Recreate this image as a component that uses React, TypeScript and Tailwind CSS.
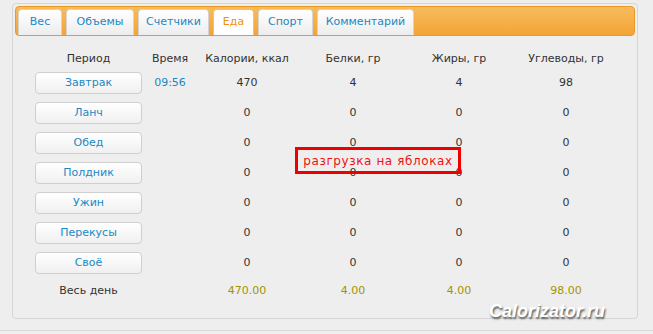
import React from "react";

const tabs = [
  { label: "Вес", w: "w-[44px]" },
  { label: "Объемы", w: "w-[68px]" },
  { label: "Счетчики", w: "w-[71px]" },
  { label: "Еда", w: "w-[41px]" },
  { label: "Спорт", w: "w-[55px]" },
  { label: "Комментарий", w: "w-[97px]" },
];

const rows = [
  { name: "Завтрак", time: "09:56", vals: ["470", "4", "4", "98"] },
  { name: "Ланч", time: "", vals: ["0", "0", "0", "0"] },
  { name: "Обед", time: "", vals: ["0", "0", "0", "0"] },
  { name: "Полдник", time: "", vals: ["0", "0", "0", "0"] },
  { name: "Ужин", time: "", vals: ["0", "0", "0", "0"] },
  { name: "Перекусы", time: "", vals: ["0", "0", "0", "0"] },
  { name: "Своё", time: "", vals: ["0", "0", "0", "0"] },
];

const grid = "grid grid-cols-[107px_56px_98px_114px_98px_116px] items-center text-center";

export default function App() {
  return (
    <div className="relative w-[653px] h-[334px] overflow-hidden bg-[#eeeeee] text-[11px] text-[#333] font-['DejaVu_Sans',sans-serif]">
      <div className="absolute left-0 right-0 top-[330px] h-px bg-[#d9d9d9]" />

      <div className="ml-[12px] mt-[3px] w-[626px] h-[316px] rounded-[4px] border border-[#d6d6d6] bg-[#eeeeee] p-[2px]">
        {/* tab bar */}
        <div className="flex h-[30px] items-end gap-[4px] rounded-[4px] border border-[#ea9a22] bg-gradient-to-b from-[#f8bb5c] to-[#f3a435] pl-[2px]">
          {tabs.map((t) =>
            t.label === "Еда" ? (
              <div
                key={t.label}
                className={`${t.w} flex h-[26px] items-center justify-center rounded-t-[4px] border border-b-0 border-[#f5c26a] bg-white text-[#ef9013]`}
              >
                {t.label}
              </div>
            ) : (
              <div
                key={t.label}
                className={`${t.w} flex h-[26px] items-center justify-center rounded-t-[4px] border border-b-0 border-[#d4d4d4] bg-gradient-to-b from-[#ffffff] to-[#ededed] text-[#1b88c4]`}
              >
                {t.label}
              </div>
            )
          )}
        </div>

        {/* table */}
        <div className="ml-[20px] mt-[13px]">
          <div className={`${grid} h-[20px]`}>
            <div>Период</div>
            <div>Время</div>
            <div>Калории, ккал</div>
            <div>Белки, гр</div>
            <div>Жиры, гр</div>
            <div>Углеводы, гр</div>
          </div>
          <div className="mt-[3px] flex flex-col gap-[8px]">
            {rows.map((r) => (
              <div key={r.name} className={`${grid} h-[22px]`}>
                <div className="flex h-[22px] items-center justify-center rounded-[4px] border border-[#cfcfcf] bg-gradient-to-b from-[#ffffff] to-[#f0f0f0] text-[#1b88c4]">
                  {r.name}
                </div>
                <div className="text-[#1b88c4]">{r.time}</div>
                {r.vals.map((v, i) => (
                  <div key={i}>{v}</div>
                ))}
              </div>
            ))}
          </div>
          <div className={`${grid} mt-[8px] h-[18px]`}>
            <div>Весь день</div>
            <div />
            <div className="text-[#a39400]">470.00</div>
            <div className="text-[#a39400]">4.00</div>
            <div className="text-[#a39400]">4.00</div>
            <div className="text-[#a39400]">98.00</div>
          </div>
        </div>
      </div>

      {/* annotation */}
      <div className="absolute left-[295px] top-[147px] flex h-[27px] w-[166px] items-center justify-center border-[3px] border-[#ee0000] text-[12px] tracking-[0.6px] text-[#ee1111]">
        разгрузка на яблоках
      </div>

      {/* watermark */}
      <div className="absolute left-[489px] top-[300px] text-[18px] font-bold italic leading-[22px] text-white font-['Liberation_Sans',sans-serif] [text-shadow:1px_2px_2px_#555]">
        Calorizator.ru
      </div>
    </div>
  );
}
